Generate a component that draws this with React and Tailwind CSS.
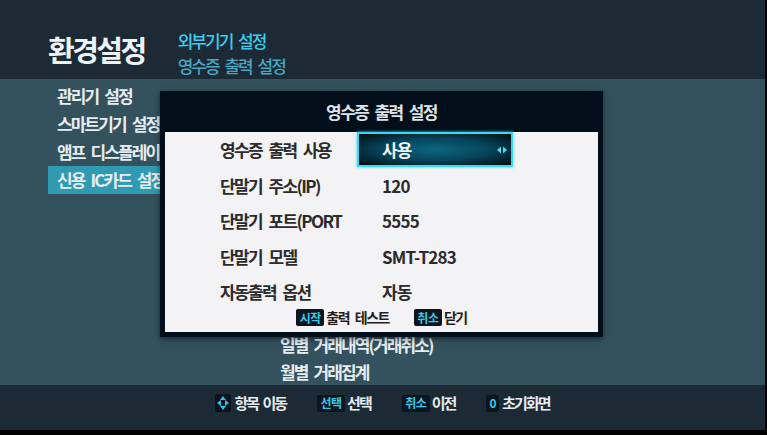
import React from 'react'

const menu = ['관리기 설정', '스마트기기 설정', '앰프 디스플레이', '신용 IC카드 설정']

const rows = [
  { label: '영수증 출력 사용', value: '사용', selected: true },
  { label: '단말기 주소(IP)', value: '120' },
  { label: '단말기 포트(PORT', value: '5555' },
  { label: '단말기 모델', value: 'SMT-T283' },
  { label: '자동출력 옵션', value: '자동' },
]

function Badge({ children, small }) {
  return (
    <span
      className={`inline-flex items-center justify-center h-[17px] rounded-[2px] bg-[#0a161e] text-[#38c9ea] text-[12px] font-semibold tracking-[-0.5px] leading-none ${
        small ? 'w-[13px]' : 'w-[28px]'
      }`}
    >
      {children}
    </span>
  )
}

function DPad() {
  return (
    <svg width="16" height="18" viewBox="0 0 16 18">
      <rect x="0" y="0" width="16" height="18" rx="2" fill="#0a141a" />
      <polygon points="8,2 5,6 11,6" fill="#30c4ea" />
      <polygon points="8,16 5,12 11,12" fill="#30c4ea" />
      <polygon points="2,9 6,6 6,12" fill="#30c4ea" />
      <polygon points="14,9 10,6 10,12" fill="#30c4ea" />
    </svg>
  )
}

function Arrows() {
  return (
    <svg width="12" height="8" viewBox="0 0 12 8">
      <polygon points="5,0.5 5,7.5 1,4" fill="#45dcf4" />
      <polygon points="7,0.5 7,7.5 11,4" fill="#45dcf4" />
    </svg>
  )
}

export default function App() {
  return (
    <div className="w-[767px] h-[435px] bg-black flex font-['Noto_Sans_CJK_KR','Noto_Sans',sans-serif] overflow-hidden">
      <div className="w-[765px] h-[430px] flex flex-col">
        {/* Header */}
        <header className="h-[79px] bg-[#1b2a34] flex items-start">
          <h1 className="pl-[48px] pt-[33px] text-[29px] leading-[32px] font-bold tracking-[-2.5px] text-[#eef2f4]">
            환경설정
          </h1>
          <div className="ml-[33px] pt-[28px] flex flex-col text-[17px] leading-[25px] tracking-[-2px] [word-spacing:4px] font-medium">
            <span className="text-[#3ecdf0]">외부기기 설정</span>
            <span className="text-[#4aa6c2]">영수증 출력 설정</span>
          </div>
        </header>

        {/* Content */}
        <main className="relative h-[306px] bg-[#33525e] flex">
          <ul className="ml-[48px] w-[140px] pt-[3px] flex flex-col">
            {menu.map((m, i) => (
              <li
                key={m}
                className={`h-[28px] pl-[9px] flex items-center whitespace-nowrap text-[17px] tracking-[-1.9px] [word-spacing:4px] font-semibold text-[#e8edf0] ${
                  i === 3 ? 'bg-[#2f9ab2]' : ''
                }`}
              >
                {m}
              </li>
            ))}
          </ul>
          <ul className="ml-[92px] pt-[252px] flex flex-col">
            {['일별 거래내역(거래취소)', '월별 거래집계'].map((m) => (
              <li key={m} className="h-[27px] flex items-center whitespace-nowrap text-[17px] tracking-[-1.9px] [word-spacing:4px] font-semibold text-[#e8edf0]">
                {m}
              </li>
            ))}
          </ul>

          {/* Dialog */}
          <section className="absolute left-[160px] top-[12px] w-[443px] h-[246px] bg-[#020e19] flex flex-col shadow-[0_2px_6px_rgba(0,0,0,0.5)]">
            <div className="h-[41px] flex items-center justify-center text-[17px] tracking-[-1.6px] [word-spacing:4px] font-semibold text-[#dde2e6]">
              영수증 출력 설정
            </div>
            <div className="mx-[5px] h-[200px] bg-[#f3f2f5] flex flex-col">
              {rows.map((r) => (
                <div key={r.label} className="h-[35.5px] flex items-center">
                  <span className="pl-[55px] w-[192px] whitespace-nowrap text-[17px] tracking-[-1.6px] [word-spacing:4px] font-semibold text-[#2b2b2b]">
                    {r.label}
                  </span>
                  {r.selected ? (
                    <div className="w-[156px] h-[35px] border-2 border-[#3ad9f1] bg-[radial-gradient(ellipse_at_center,#0b6680_0%,#07445a_50%,#010b10_100%)] flex items-center justify-between pl-[23px] pr-[3px] shadow-[0_0_3px_#3ad9f1]">
                      <span className="text-[17px] tracking-[-0.8px] font-semibold text-[#eef4f6]">{r.value}</span>
                      <Arrows />
                    </div>
                  ) : (
                    <span className="pl-[25px] text-[17px] tracking-[-0.8px] font-semibold text-[#2b2b2b]">{r.value}</span>
                  )}
                </div>
              ))}
              <div className="h-[16px] flex items-center justify-center gap-[25px]">
                <div className="flex items-center gap-[2px]">
                  <Badge>시작</Badge>
                  <span className="text-[14px] tracking-[-1.5px] [word-spacing:4px] font-semibold text-[#1e1e1e]">출력 테스트</span>
                </div>
                <div className="flex items-center gap-[2px]">
                  <Badge>취소</Badge>
                  <span className="text-[14px] tracking-[-1.5px] font-semibold text-[#1e1e1e]">닫기</span>
                </div>
              </div>
            </div>
          </section>
        </main>

        {/* Footer */}
        <footer className="h-[45px] bg-[#1b2a34] flex items-start justify-center gap-[31px] pt-[7px] text-[15px] tracking-[-2px] [word-spacing:3px] font-semibold text-[#e8ecef]">
          <div className="flex items-center gap-[3px]">
            <DPad />
            <span>항목 이동</span>
          </div>
          <div className="flex items-center gap-[2px]">
            <Badge>선택</Badge>
            <span>선택</span>
          </div>
          <div className="flex items-center gap-[2px]">
            <Badge>취소</Badge>
            <span>이전</span>
          </div>
          <div className="flex items-center gap-[3px]">
            <Badge small>0</Badge>
            <span>초기화면</span>
          </div>
        </footer>
      </div>
    </div>
  )
}
